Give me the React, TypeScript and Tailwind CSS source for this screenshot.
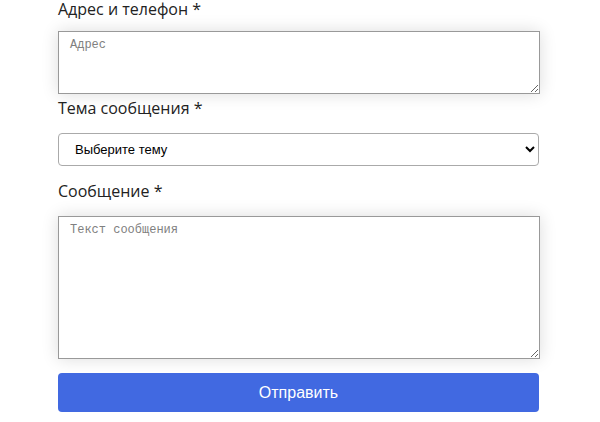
export default function App() {
  const label = "block text-[16px] leading-[22px] text-[#222] font-['Open_Sans',sans-serif]";
  const area =
    "block w-full resize-y bg-white border border-[#999] px-[11px] pt-[5px] text-[12px] leading-[16px] text-[#333] placeholder:text-[#808080] font-['Liberation_Mono',monospace] shadow-[0_0_16px_rgba(0,0,0,0.14)] outline-none";

  return (
    <div className="min-h-[422px] w-[600px] bg-white overflow-hidden">
      <form className="ml-[58px] w-[482px] flex flex-col" onSubmit={e => e.preventDefault()}>
        {/* first label sits tight against the top edge */}
        <label className="block text-[16px] leading-[17px] pt-[1px] text-[#222] font-['Open_Sans',sans-serif]">Адрес и телефон *</label>
        <textarea placeholder="Адрес" className={`${area} mt-[13px] h-[63px]`} />

        <label className={`${label} mt-[3px]`}>Тема сообщения *</label>
        <select
          defaultValue=""
          className="mt-[14px] h-[33px] w-[481px] bg-white border border-[#aaa] rounded-[4px] pl-[12px] pr-[8px] text-[13px] text-black font-['Liberation_Sans',Arial,sans-serif]"
        >
          <option value="">Выберите тему</option>
          <option value="1">Вопрос</option>
          <option value="2">Предложение</option>
        </select>

        <label className={`${label} mt-[14px]`}>Сообщение *</label>
        <textarea placeholder="Текст сообщения" className={`${area} mt-[14px] h-[143px]`} />

        <button
          type="submit"
          className="mt-[14px] h-[39px] w-[481px] rounded-[4px] bg-[#4169e1] text-white text-[16px] font-['Liberation_Sans',Arial,sans-serif]"
        >
          Отправить
        </button>
      </form>
    </div>
  );
}
